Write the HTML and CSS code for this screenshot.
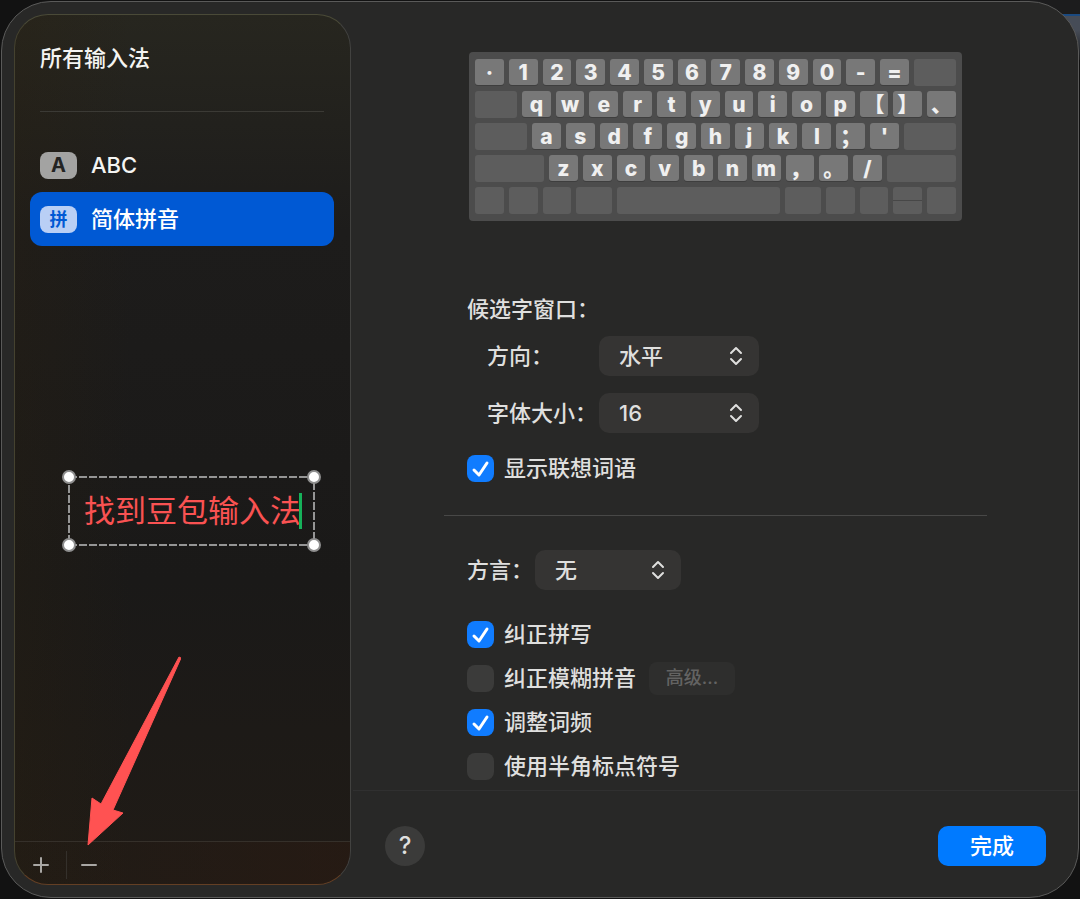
FILE: index.html
```html
<!DOCTYPE html>
<html lang="zh-CN">
<head>
<meta charset="utf-8">
<meta name="viewport" content="width=device-width, initial-scale=1">
<title>所有输入法</title>
<link rel="stylesheet" href="styles.css">
</head>
<body>
<div class="window">
  <aside class="sidebar">
    <h1 class="sidebar-title">所有输入法</h1>
    <ul class="sources">
      <li><button class="source" type="button"><span class="badge">A</span><span class="latin">ABC</span></button></li>
      <li><button class="source selected" type="button" aria-current="true"><span class="badge badge-cjk">拼</span><span>简体拼音</span></button></li>
    </ul>
    <div class="toolbar">
      <button class="tool" type="button" aria-label="添加">
        <svg width="16" height="16" viewBox="0 0 16 16"><path d="M1 8H15M8 1V15"/></svg>
      </button>
      <button class="tool" type="button" aria-label="移除">
        <svg width="16" height="16" viewBox="0 0 16 16"><path d="M1 8H15"/></svg>
      </button>
    </div>

    <div class="note">
      <svg class="note-frame" aria-hidden="true"><rect x="0" y="0" width="100%" height="100%"/></svg>
      <input class="note-text" type="text" value="找到豆包输入法" aria-label="标注文字">
      <span class="caret"></span>
      <span class="handle tl"></span><span class="handle tr"></span>
      <span class="handle bl"></span><span class="handle br"></span>
    </div>
    <svg class="arrow" width="96" height="192" viewBox="0 0 96 192" aria-hidden="true">
      <path d="M94 2 L96 3 L28 155 L38 158 L3 190 L7 143 L16 149 Z"/>
    </svg>
  </aside>

  <main class="main">
    <div class="content">
      <div class="keyboard" role="img" aria-label="键盘布局">
        <div class="keys"><span class="key">·</span><span class="key">1</span><span class="key">2</span><span class="key">3</span><span class="key">4</span><span class="key">5</span><span class="key">6</span><span class="key">7</span><span class="key">8</span><span class="key">9</span><span class="key">0</span><span class="key">-</span><span class="key">=</span><span class="blank tab"></span></div>
        <div class="keys"><span class="blank tab"></span><span class="key">q</span><span class="key">w</span><span class="key">e</span><span class="key">r</span><span class="key">t</span><span class="key">y</span><span class="key">u</span><span class="key">i</span><span class="key">o</span><span class="key">p</span><span class="key">【</span><span class="key">】</span><span class="key">、</span></div>
        <div class="keys"><span class="blank caps"></span><span class="key">a</span><span class="key">s</span><span class="key">d</span><span class="key">f</span><span class="key">g</span><span class="key">h</span><span class="key">j</span><span class="key">k</span><span class="key">l</span><span class="key">；</span><span class="key">'</span><span class="blank caps"></span></div>
        <div class="keys"><span class="blank shift"></span><span class="key">z</span><span class="key">x</span><span class="key">c</span><span class="key">v</span><span class="key">b</span><span class="key">n</span><span class="key">m</span><span class="key">，</span><span class="key">。</span><span class="key">/</span><span class="blank shift"></span></div>
        <div class="keys"><span class="blank"></span><span class="blank"></span><span class="blank"></span><span class="blank command"></span><span class="blank space"></span><span class="blank command"></span><span class="blank"></span><span class="blank"></span><span class="blank split"></span><span class="blank"></span></div>
      </div>

      <section class="group candidate">
        <h2 class="heading">候选字窗口：</h2>
        <div class="fields">
          <label for="direction">方向：</label>
          <div class="picker">
            <select id="direction"><option>水平</option><option>垂直</option></select>
            <svg width="14" height="20" viewBox="0 0 14 20" aria-hidden="true"><path d="M2 7L7 2L12 7M2 13L7 18L12 13"/></svg>
          </div>
          <label for="size">字体大小：</label>
          <div class="picker">
            <select id="size" class="latin"><option>16</option><option>18</option></select>
            <svg width="14" height="20" viewBox="0 0 14 20" aria-hidden="true"><path d="M2 7L7 2L12 7M2 13L7 18L12 13"/></svg>
          </div>
        </div>
        <label class="check"><span class="box"><input type="checkbox" checked><svg viewBox="0 0 27 27" aria-hidden="true"><path d="M7 15L12 20L20 8"/></svg></span>显示联想词语</label>
      </section>

      <hr class="rule">

      <section class="group">
        <div class="dialect">
          <label for="dialect">方言：</label>
          <div class="picker">
            <select id="dialect"><option>无</option><option>粤语</option></select>
            <svg width="14" height="20" viewBox="0 0 14 20" aria-hidden="true"><path d="M2 7L7 2L12 7M2 13L7 18L12 13"/></svg>
          </div>
        </div>
        <div class="options">
          <div class="option"><label class="check"><span class="box"><input type="checkbox" checked><svg viewBox="0 0 27 27" aria-hidden="true"><path d="M7 15L12 20L20 8"/></svg></span>纠正拼写</label></div>
          <div class="option"><label class="check"><span class="box"><input type="checkbox"></span>纠正模糊拼音</label><button class="advanced" type="button" disabled>高级...</button></div>
          <div class="option"><label class="check"><span class="box"><input type="checkbox" checked><svg viewBox="0 0 27 27" aria-hidden="true"><path d="M7 15L12 20L20 8"/></svg></span>调整词频</label></div>
          <div class="option"><label class="check"><span class="box"><input type="checkbox"></span>使用半角标点符号</label></div>
        </div>
      </section>
    </div>
    <footer class="footer">
      <button class="help" type="button" aria-label="帮助">?</button>
      <button class="done" type="button">完成</button>
    </footer>
  </main>
</div>
</body>
</html>
```
FILE: styles.css
```css
* { box-sizing: border-box; }

body {
  margin: 0;
  min-height: 100vh;
  padding: 1px;
  display: flex;
  background: linear-gradient(#1c1c1d 14px, #1b4a80 14px, #1b4a80 16px, #464c57 16px, #464c57 30px, #1a1a1a 60px, transparent 60px) right top / 60px 60px no-repeat, #121212;
  color: #dfdfde;
  font: 500 22px/30px Inter, "Noto Sans CJK SC", sans-serif;
}

button, select, input { font: inherit; color: inherit; margin: 0; border: 0; }
h1, h2, ul { margin: 0; padding: 0; font: inherit; }

.window {
  flex: 1;
  display: flex;
  padding: 12px 0 12px 12px;
  border: 1px solid #5a5a59;
  border-radius: 50px;
  background: #282827;
}

.sidebar {
  position: relative;
  flex: 0 0 337px;
  display: flex;
  flex-direction: column;
  border: 1px solid #494840;
  border-color: #4a4a38 #424240 #643f24 #45422f;
  border-radius: 34px;
  background:
    linear-gradient(90deg, rgba(42, 32, 16, .3), transparent 35%),
    linear-gradient(#27261f, #1d1c1b 25%, #1a1918 65%, #201b16);
  overflow: hidden;
}

.sidebar-title {
  margin: 0 26px 0 25px;
  padding: 28px 0 38px;
  border-bottom: 1px solid #3b3a35;
  color: #f4f4f2;
}

.sources {
  flex: 1;
  padding: 26px 16px 26px 15px;
  list-style: none;
}

.source {
  display: flex;
  align-items: center;
  gap: 14px;
  width: 100%;
  height: 54px;
  padding: 0 10px;
  border-radius: 12px;
  background: none;
  color: #f4f4f2;
}

.selected { background: #0059d4; color: #fff; }

.badge {
  width: 37px;
  height: 27px;
  border-radius: 8px;
  background: #a3a3a2;
  color: #242423;
  font-size: 20px;
  font-weight: 700;
  line-height: 27px;
}

.badge-cjk { background: #b9cff5; color: #0059d4; font-size: 18px; }

.toolbar {
  display: flex;
  align-items: center;
  height: 43px;
  padding-top: 3px;
  border-top: 1px solid #35302a;
  background: linear-gradient(90deg, transparent, rgba(42, 26, 18, .6));
}

.tool {
  display: grid;
  place-items: center;
  width: 51px;
  height: 28px;
  padding: 0;
  background: none;
  color: #a9a7a4;
}

.tool + .tool { width: 45px; border-left: 1px solid #34302b; }

.tool svg { fill: none; stroke: currentColor; stroke-width: 2; stroke-linecap: round; }

.note {
  position: absolute;
  left: 54px;
  top: 462px;
  display: flex;
  align-items: center;
  width: 245px;
  height: 68px;
  padding-left: 15px;
}

.note-frame {
  position: absolute;
  inset: 0;
  width: 100%;
  height: 100%;
  overflow: visible;
  fill: none;
  stroke: #959595;
  stroke-width: 2;
  stroke-dasharray: 8 2;
}

.note-text {
  width: 215px;
  padding: 0;
  background: none;
  color: #f95252;
  font-size: 31px;
  font-weight: 400;
  line-height: 40px;
}

.caret { flex: none; width: 3px; height: 36px; background: #16b15a; }

.handle {
  position: absolute;
  width: 14px;
  height: 14px;
  border: 2px solid #8f8f8f;
  border-radius: 50%;
  background: #fff;
}

.tl { left: -7px; top: -7px; }
.tr { right: -7px; top: -7px; }
.bl { left: -7px; bottom: -7px; }
.br { right: -7px; bottom: -7px; }

.arrow { position: absolute; left: 70px; top: 640px; fill: #ff5252; stroke: #ff5252; stroke-linejoin: round; }

.main {
  flex: 1;
  display: flex;
  flex-direction: column;
  margin: -12px 0;
  padding-left: 2px;
}

.content {
  flex: 1;
  width: 100%;
  max-width: 543px;
  margin: 0 auto;
  padding-top: 50px;
}

.keyboard {
  display: grid;
  gap: 5px;
  margin: 0 25px;
  padding: 7px 6px;
  border-radius: 4px;
  background: #4c4c4c;
}

.keys { display: flex; gap: 5px; height: 27px; }

.key, .blank { flex: 288 0 0; min-width: 0; border-radius: 3px; }

.key {
  display: flex;
  justify-content: center;
  height: 26px;
  background: #787878;
  box-shadow: 0 1px #3e3e3e;
  color: #f0f0f0;
  font-size: 21px;
  font-weight: 800;
  line-height: 28px;
}

.blank { background: #5d5d5d; }
.tab { flex-grow: 420; }
.caps { flex-grow: 521; }
.shift { flex-grow: 690; }
.command { flex-grow: 356; }
.space { flex-grow: 1630; }
.split { background: linear-gradient(#5d5d5d 13px, #474747 13px, #474747 14px, #5d5d5d 14px); }

.group { padding-left: 23px; }
.candidate { padding-top: 73px; }

.fields {
  display: grid;
  grid-template-columns: 112px 160px;
  align-items: center;
  gap: 17px 0;
  padding: 12px 0 20px 20px;
}

.fields label { white-space: nowrap; }

.picker { display: grid; align-items: center; }
.picker > * { grid-area: 1 / 1; }

.picker select {
  appearance: none;
  width: 100%;
  height: 40px;
  padding: 0 20px;
  border-radius: 10px;
  background: #353433;
}

.picker svg { justify-self: end; margin-right: 16px; pointer-events: none; }
.picker path { fill: none; stroke: #dfdfde; stroke-width: 2; stroke-linecap: round; stroke-linejoin: round; }

.check { display: flex; align-items: center; gap: 10px; }

.box { display: grid; width: 27px; height: 27px; }
.box > * { grid-area: 1 / 1; }

.box input {
  appearance: none;
  width: 27px;
  height: 27px;
  border-radius: 8px;
  background: #3b3b3a;
}

.box input:checked { background: #107cff; }
.box svg { pointer-events: none; }
.box path { fill: none; stroke: #fff; stroke-width: 3; stroke-linecap: round; stroke-linejoin: round; }

.rule { height: 1px; margin: 32px 0 34px; border: 0; background: #484847; }

.dialect { display: grid; grid-template-columns: 68px 146px; align-items: center; }

.options { padding-top: 22px; }
.option { display: flex; align-items: center; gap: 13px; height: 44px; }

.advanced {
  width: 86px;
  height: 33px;
  padding: 0;
  border-radius: 8px;
  background: #2e2e2d;
  color: #636362;
  font-size: 18px;
}

.footer {
  display: flex;
  align-items: center;
  justify-content: space-between;
  height: 107px;
  padding: 3px 32px 0 32px;
  border-top: 1px solid #303030;
}

.help {
  width: 40px;
  height: 40px;
  padding: 0;
  border-radius: 50%;
  background: #3b3b3a;
  font-size: 24px;
}

.done {
  width: 108px;
  height: 40px;
  padding: 0;
  border-radius: 10px;
  background: #007aff;
  color: #fff;
}
```
